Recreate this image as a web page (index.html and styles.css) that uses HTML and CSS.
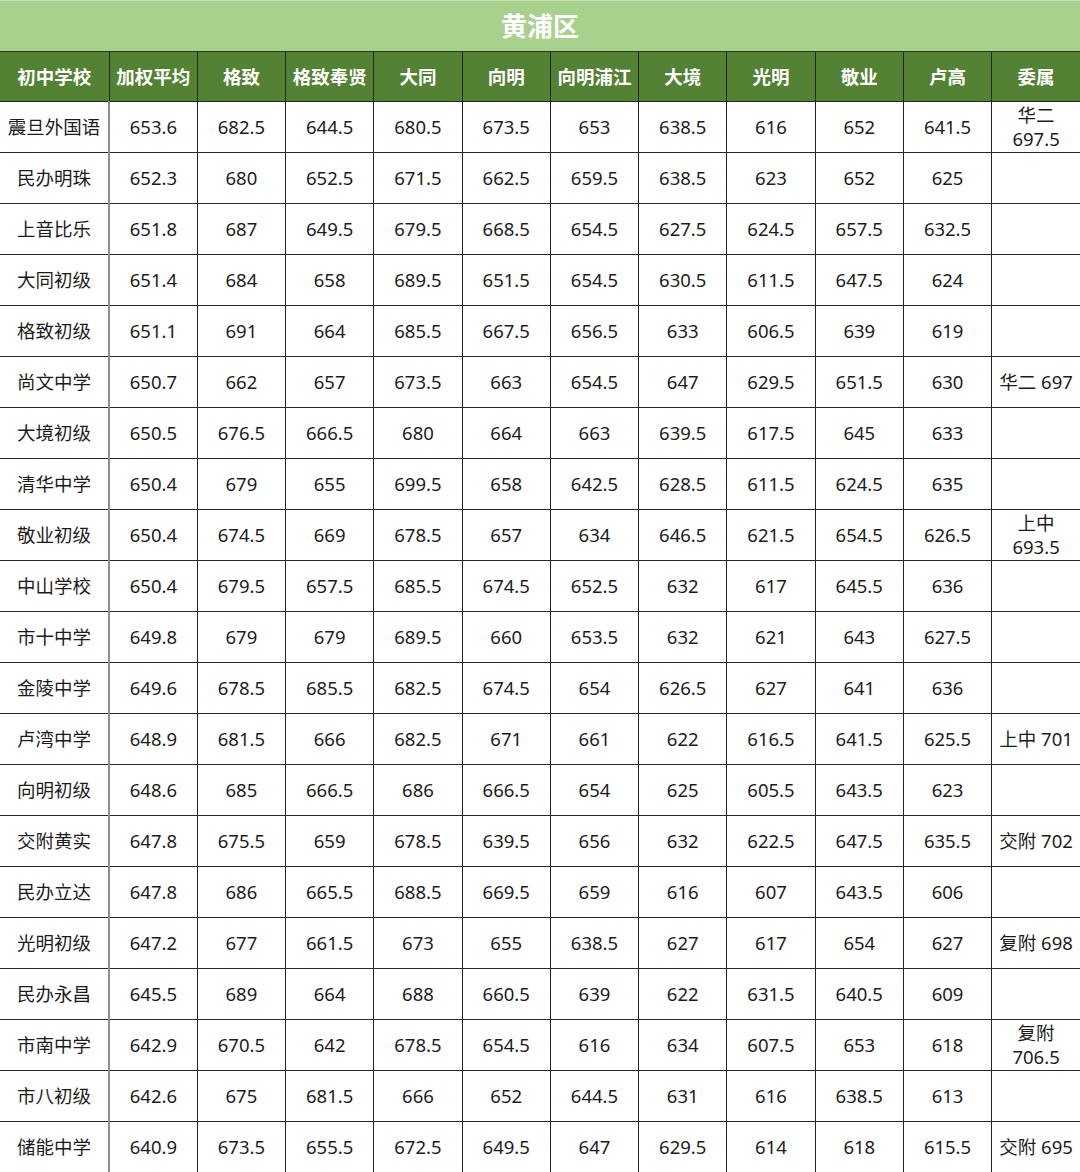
FILE: index.html
```html
<!DOCTYPE html>
<html lang="zh">
<head>
<meta charset="utf-8">
<title>黄浦区</title>
<link rel="stylesheet" href="styles.css">
</head>
<body>
<div class="sheet">
  <div class="title">黄浦区</div>
  <table class="scores">
    <colgroup>
      <col class="c-name">
      <col span="11" class="c-num">
    </colgroup>
    <thead>
      <tr>
        <th>初中学校</th><th>加权平均</th><th>格致</th><th>格致奉贤</th><th>大同</th><th>向明</th><th>向明浦江</th><th>大境</th><th>光明</th><th>敬业</th><th>卢高</th><th>委属</th>
      </tr>
    </thead>
    <tbody>
      <tr><td>震旦外国语</td><td>653.6</td><td>682.5</td><td>644.5</td><td>680.5</td><td>673.5</td><td>653</td><td>638.5</td><td>616</td><td>652</td><td>641.5</td><td>华二 697.5</td></tr>
      <tr><td>民办明珠</td><td>652.3</td><td>680</td><td>652.5</td><td>671.5</td><td>662.5</td><td>659.5</td><td>638.5</td><td>623</td><td>652</td><td>625</td><td></td></tr>
      <tr><td>上音比乐</td><td>651.8</td><td>687</td><td>649.5</td><td>679.5</td><td>668.5</td><td>654.5</td><td>627.5</td><td>624.5</td><td>657.5</td><td>632.5</td><td></td></tr>
      <tr><td>大同初级</td><td>651.4</td><td>684</td><td>658</td><td>689.5</td><td>651.5</td><td>654.5</td><td>630.5</td><td>611.5</td><td>647.5</td><td>624</td><td></td></tr>
      <tr><td>格致初级</td><td>651.1</td><td>691</td><td>664</td><td>685.5</td><td>667.5</td><td>656.5</td><td>633</td><td>606.5</td><td>639</td><td>619</td><td></td></tr>
      <tr><td>尚文中学</td><td>650.7</td><td>662</td><td>657</td><td>673.5</td><td>663</td><td>654.5</td><td>647</td><td>629.5</td><td>651.5</td><td>630</td><td>华二 697</td></tr>
      <tr><td>大境初级</td><td>650.5</td><td>676.5</td><td>666.5</td><td>680</td><td>664</td><td>663</td><td>639.5</td><td>617.5</td><td>645</td><td>633</td><td></td></tr>
      <tr><td>清华中学</td><td>650.4</td><td>679</td><td>655</td><td>699.5</td><td>658</td><td>642.5</td><td>628.5</td><td>611.5</td><td>624.5</td><td>635</td><td></td></tr>
      <tr><td>敬业初级</td><td>650.4</td><td>674.5</td><td>669</td><td>678.5</td><td>657</td><td>634</td><td>646.5</td><td>621.5</td><td>654.5</td><td>626.5</td><td>上中 693.5</td></tr>
      <tr><td>中山学校</td><td>650.4</td><td>679.5</td><td>657.5</td><td>685.5</td><td>674.5</td><td>652.5</td><td>632</td><td>617</td><td>645.5</td><td>636</td><td></td></tr>
      <tr><td>市十中学</td><td>649.8</td><td>679</td><td>679</td><td>689.5</td><td>660</td><td>653.5</td><td>632</td><td>621</td><td>643</td><td>627.5</td><td></td></tr>
      <tr><td>金陵中学</td><td>649.6</td><td>678.5</td><td>685.5</td><td>682.5</td><td>674.5</td><td>654</td><td>626.5</td><td>627</td><td>641</td><td>636</td><td></td></tr>
      <tr><td>卢湾中学</td><td>648.9</td><td>681.5</td><td>666</td><td>682.5</td><td>671</td><td>661</td><td>622</td><td>616.5</td><td>641.5</td><td>625.5</td><td>上中 701</td></tr>
      <tr><td>向明初级</td><td>648.6</td><td>685</td><td>666.5</td><td>686</td><td>666.5</td><td>654</td><td>625</td><td>605.5</td><td>643.5</td><td>623</td><td></td></tr>
      <tr><td>交附黄实</td><td>647.8</td><td>675.5</td><td>659</td><td>678.5</td><td>639.5</td><td>656</td><td>632</td><td>622.5</td><td>647.5</td><td>635.5</td><td>交附 702</td></tr>
      <tr><td>民办立达</td><td>647.8</td><td>686</td><td>665.5</td><td>688.5</td><td>669.5</td><td>659</td><td>616</td><td>607</td><td>643.5</td><td>606</td><td></td></tr>
      <tr><td>光明初级</td><td>647.2</td><td>677</td><td>661.5</td><td>673</td><td>655</td><td>638.5</td><td>627</td><td>617</td><td>654</td><td>627</td><td>复附 698</td></tr>
      <tr><td>民办永昌</td><td>645.5</td><td>689</td><td>664</td><td>688</td><td>660.5</td><td>639</td><td>622</td><td>631.5</td><td>640.5</td><td>609</td><td></td></tr>
      <tr><td>市南中学</td><td>642.9</td><td>670.5</td><td>642</td><td>678.5</td><td>654.5</td><td>616</td><td>634</td><td>607.5</td><td>653</td><td>618</td><td>复附 706.5</td></tr>
      <tr><td>市八初级</td><td>642.6</td><td>675</td><td>681.5</td><td>666</td><td>652</td><td>644.5</td><td>631</td><td>616</td><td>638.5</td><td>613</td><td></td></tr>
      <tr><td>储能中学</td><td>640.9</td><td>673.5</td><td>655.5</td><td>672.5</td><td>649.5</td><td>647</td><td>629.5</td><td>614</td><td>618</td><td>615.5</td><td>交附 695</td></tr>
    </tbody>
  </table>
</div>
</body>
</html>
```

FILE: styles.css
```css
html, body {
  margin: 0;
  padding: 0;
  background: #ffffff;
}

body {
  font-family: "Noto Sans", "Noto Sans CJK SC", sans-serif;
  color: #1c1c1c;
}

.sheet {
  width: 1080px;
}

.title {
  height: 51px;
  box-sizing: border-box;
  background: #a9d18e;
  border-top: 1px solid #c9e2b8;
  color: #ffffff;
  font-family: "Noto Sans CJK SC", sans-serif;
  font-weight: 700;
  font-size: 26px;
  line-height: 47px;
  text-align: center;
}

.scores {
  width: 1080px;
  table-layout: fixed;
  border-collapse: collapse;
}

.c-name {
  width: 109px;
}

.scores th,
.scores td {
  height: 51px;
  padding: 0 4px;
  text-align: center;
  vertical-align: middle;
  border: 1px solid #262626;
  box-sizing: border-box;
}

.scores tr > :first-child {
  border-left: none;
}

.scores tr > :last-child {
  border-right: none;
}

.scores th {
  height: 50px;
  background: #548235;
  color: #ffffff;
  font-family: "Noto Sans CJK SC", sans-serif;
  font-weight: 700;
  font-size: 18.5px;
  line-height: 1.2;
  white-space: nowrap;
  padding: 0;
}

.scores thead th {
  border-top: 1px solid #2b3d20;
}

.scores td {
  font-size: 18.5px;
  line-height: 24px;
  font-weight: 400;
}

.scores td:first-child {
  border-right: 2px solid #8f8f8f;
  white-space: nowrap;
  padding: 0;
}
```
